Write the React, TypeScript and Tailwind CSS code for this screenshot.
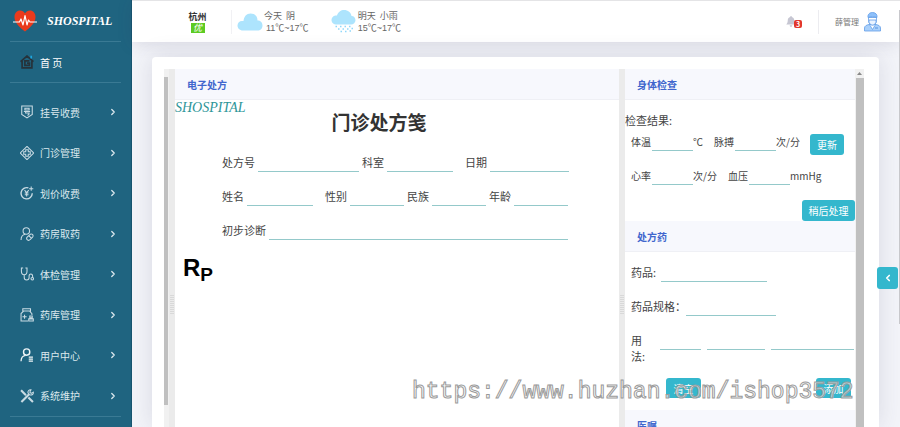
import type { ReactNode } from 'react'
import { ChevronLeft, ChevronRight } from 'lucide-react'

const menu: { label: string; icon: ReactNode }[] = [
  {
    label: '挂号收费',
    icon: (
      <>
        <path d="M2.500 1.500h15v12L10 18.500l-7.500-5z" />
        <path d="M7 4.500h6v2.500H7zM5.500 9.200h9M8 9.200v2.300h5c0 2-.6 3-2.500 3" />
      </>
    ),
  },
  {
    label: '门诊管理',
    icon: (
      <>
        <path d="M10 .5 19.500 10 10 19.500.5 10z" strokeLinejoin="round" />
        <path d="M8.200 5.300h3.600v2.900h2.900v3.600h-2.900v2.900H8.200v-2.900H5.300V8.200h2.900z" />
      </>
    ),
  },
  {
    label: '划价收费',
    icon: (
      <>
        <path d="M12 2.800A8 8 0 1 0 17.500 10.500" strokeWidth="2" />
        <path d="M16 .8v6M13 3.800h6" />
        <path d="m6.500 6 3 3.500 3-3.500M9.500 9.500V15M6.800 10h5.400M6.800 12.400h5.400" />
      </>
    ),
  },
  {
    label: '药房取药',
    icon: (
      <>
        <circle cx="9" cy="5.800" r="4.600" />
        <path d="M1.500 18.500c0-4.500 2.500-7.500 6-8.100" />
        <path d="M10.200 14.500 14 10.800a2.600 2.600 0 0 1 4 3.600l-3.600 3.500a2.600 2.600 0 0 1-4.200-3.400zM12.500 12.500l3.800 3.500" />
      </>
    ),
  },
  {
    label: '体检管理',
    icon: (
      <>
        <path d="M4.500 1.500H2v4.500c0 3 1.700 5 4 5s4-2 4-5V1.500H7.700M6 11v3.500C6 17 7.600 18.500 9.500 18.500S13 17 13 15v-2c0-2 1-3 2.500-3s2.500 1.200 2.500 3v2" />
        <circle cx="17.500" cy="16.800" r="1.800" />
      </>
    ),
  },
  {
    label: '药库管理',
    icon: (
      <>
        <path d="M4 1.200h11v3H4zM5.500 4.200 1.500 8v10.500h10M13.500 4.200 17 8v2M3.500 12.500h6M6.500 9.500v6" />
        <path d="M14 11.500h3.500v2.500H14zM12.500 15.500h6.500v3h-6.500z" />
      </>
    ),
  },
  {
    label: '用户中心',
    icon: (
      <>
        <circle cx="9.500" cy="5.800" r="4.500" stroke="#f0f6f8" strokeWidth="2" />
        <path d="M1.500 19c0-5 2.500-8 6.500-8.500M12.500 13h6M12.500 15.800h6M12.500 18.600h6" stroke="#f0f6f8" strokeWidth="1.800" />
      </>
    ),
  },
  {
    label: '系统维护',
    icon: (
      <>
        <path d="M1.500 1.700 8.500 9M12 12l6.500 6.500" strokeWidth="3" />
        <path d="M2 18.500 13 7.500" strokeWidth="3" />
        <path d="M19 4.500 16 6.300 14 4.400 15.700 1.200c-2.700-.5-5 1.700-4.200 4.500l2.700 2.700c2.700.9 5.500-1 4.800-3.900z" />
      </>
    ),
  },
]

function HeartLogo() {
  return (
    <svg viewBox="0 0 48 44" className="w-6 h-[22px]">
      <path d="M24 43C14 35 3 26 3 14 3 6 8 1 14 1c4 0 8 2 10 6 2-4 6-6 10-6 6 0 11 5 11 13 0 12-11 21-21 29z" fill="#ea3a1c" />
      <path d="M0 24h13l3-6 4 12 4-19 4 19 3-10 3 4h14" fill="none" stroke="#fff" strokeWidth="2.400" strokeLinejoin="round" />
    </svg>
  )
}

function Cloud({ rain = false }: { rain?: boolean }) {
  return (
    <svg viewBox="0 0 52 46" className="w-[26px] h-[23px]" fill="#ade4fd">
      {rain ? (
        <>
          <path d="M11 29a9 9 0 0 1-2-18c2 0 3 0 3 0C14 4 20 0 26 0c8 0 14 5 15 12 5 0 8 4 8 8.500S45 29 40 29z" />
          <path d="M9 33h3M18 33h3M27 33h3M36 33h3M14 38h3M23 38h3M32 38h3M41 37h3M19 43h3M28 43h3M37 42h3" stroke="#8fd8fa" strokeWidth="3" />
        </>
      ) : (
        <path d="M12 41C5 41 1 36 1 31s4-9 9-9h3C14 13 19 7 27 7c8 0 14 5 14 14 6 0 10 4 10 10s-4 10-10 10z" />
      )}
    </svg>
  )
}

function Doctor() {
  return (
    <svg viewBox="0 0 34 40" className="w-[17px] h-5" stroke="#5c9ae6" strokeWidth="1.500">
      <path d="M1 38v-6c0-4 4-6 9-7h14c5 1 9 3 9 7v6z" fill="#a9d0fb" />
      <path d="M11 25l6 10 6-10z" fill="#fff" />
      <path d="M9 11v6c0 6 4 9 8 9s8-3 8-9v-6z" fill="#fff" />
      <path d="M8 11c-1-6 3-10 9-10s10 4 9 10c-6-2-12-2-18 0z" fill="#8ec0fa" />
      <path d="M10 16h14v3c0 4-3 7-7 7s-7-3-7-7z" fill="#eaf3ff" />
      <path d="M22 32h6" stroke="#3c7fd8" />
    </svg>
  )
}

function Sidebar() {
  return (
    <aside className="w-[132px] shrink-0 bg-[#1f6480] border-r border-[#175570] px-[10px] text-white">
      <div className="h-[42px] flex items-center gap-[10px] pl-[3px] border-b border-[#3a7a94]">
        <HeartLogo />
        <span className="font-['Liberation_Serif'] text-[12px] font-bold italic">SHOSPITAL</span>
      </div>
      <a href="#home" className="h-[41px] flex items-center gap-[6px] pl-[10px] border-b border-[#3a7a94] text-[10px]">
        <svg viewBox="0 0 20 20" className="w-[14px] h-[14px]" fill="none" stroke="#26323a" strokeWidth="2.400">
          <path d="M.8 9.500 10 1.500l9.200 8M3 8.500v10h14v-10M13.500 8.500H7v6.300h6.500v-3.300H10" />
          <path d="M16 1v4" stroke="#1da6e0" />
        </svg>
        首 页
      </a>
      <nav className="h-[334px] pt-[9px] grid auto-rows-fr border-b border-[#3a7a94]">
        {menu.map((m) => (
          <a key={m.label} href="#menu" className="flex items-center gap-[6px] pl-[10px] text-[10px] text-[#dce9ee]">
            <svg viewBox="0 0 20 20" className="w-[14px] h-[14px]" fill="none" stroke="#c9dbe3" strokeWidth="1.500">
              {m.icon}
            </svg>
            <span className="flex-1">{m.label}</span>
            <ChevronRight className="w-[10px] h-[10px] mr-[3px]" strokeWidth={3} />
          </a>
        ))}
      </nav>
    </aside>
  )
}

function Header() {
  return (
    <header className="h-[42px] shrink-0 bg-white border-t border-[#e4e4e6] shadow-[0_2px_16px_rgba(60,60,90,0.14)] flex items-center text-[9px] leading-3 text-[#666]">
      <div className="w-[100px] h-6 pl-8 border-r border-[#f1f1f4] flex flex-col items-center justify-center">
        <b className="text-[#333]">杭州</b>
        <span className="w-[14px] h-[10px] bg-[#5ccb22] text-white italic leading-[10px] text-center">优</span>
      </div>
      <div className="flex items-center ml-[5px]">
        <Cloud />
        <div className="ml-px">
          <p>今天&nbsp; 阴</p>
          <p className="pl-[2px] font-['Liberation_Sans','Noto_Sans_CJK_SC',sans-serif]">11℃~17℃</p>
        </div>
      </div>
      <div className="flex items-center ml-[22px]">
        <Cloud rain />
        <div className="ml-px">
          <p>明天&nbsp; 小雨</p>
          <p className="font-['Liberation_Sans','Noto_Sans_CJK_SC',sans-serif]">15℃~17℃</p>
        </div>
      </div>
      <button className="relative ml-auto w-4 h-3 mr-4" aria-label="消息">
        <svg viewBox="0 0 20 22" className="w-[10px] h-[11px]" fill="#c6c6d2">
          <path d="M10 0c1.200 0 1.600.8 1.600 1.800C15 2.600 16.500 5.500 16.500 9c0 4 1.500 6 3 8H.5c1.500-2 3-4 3-8C3.500 5.500 5 2.600 8.400 1.800 8.400.8 8.800 0 10 0zM7.500 18.500h5c0 2-1 3-2.500 3s-2.500-1-2.500-3z" />
        </svg>
        <span className="absolute right-0 top-1 w-2 h-2 rounded-[2px] bg-[#e2362b] text-white text-[7px] leading-2 font-bold">3</span>
      </button>
      <div className="h-6 border-l border-[#ececf0] pl-4 pr-[19px] flex items-center gap-[5px] text-[8px] text-[#777]">
        薛管理
        <Doctor />
      </div>
    </header>
  )
}

type LineProps = { id: string; width: string; label?: string; unit?: string; gap?: string }

function Line({ id, width, label, unit, gap = 'mr-[3px]' }: LineProps) {
  return (
    <div className="flex items-center h-5 shrink-0">
      {label && <label htmlFor={id} className={`${gap} whitespace-nowrap`}>{label}</label>}
      <input id={id} aria-label={label ?? id} className={`${width} h-5 border-b border-[#94c9ca] outline-none bg-transparent`} />
      {unit && <span>{unit}</span>}
    </div>
  )
}

function PanelTitle({ children }: { children: ReactNode }) {
  return (
    <h3 className="h-[31px] shrink-0 pl-3 flex items-center bg-[#f7f8fd] border-b border-[#eff0f5] text-[10px] font-bold text-[#4166cd]">
      {children}
    </h3>
  )
}

function Splitter() {
  return (
    <div className="w-[6px] shrink-0 bg-[#ebebeb] flex justify-center pt-[226px]">
      <svg width="4" height="19" stroke="#c6c6c6" strokeDasharray="1 1">
        <path d="M1 0v19M3 0v19" />
      </svg>
    </div>
  )
}

function Prescription() {
  return (
    <section className="flex-1 min-w-0">
      <PanelTitle>电子处方</PanelTitle>
      <p className="h-4 font-['Liberation_Serif'] text-[14px] leading-4 italic text-[#2d9598]">SHOSPITAL</p>
      <h1 className="h-9 pr-9 text-center text-[19px] leading-[12px] font-bold text-[#333]">门诊处方笺</h1>
      <div className="pl-[47px] flex flex-col gap-[14px] text-[11px]">
        <div className="flex">
          <Line id="no" label="处方号" width="w-[101px]" />
          <div className="ml-[3px]"><Line id="dept" label="科室" width="w-[66px]" /></div>
          <div className="ml-3"><Line id="date" label="日期" width="w-[79px]" /></div>
        </div>
        <div className="flex">
          <Line id="name" label="姓名" width="w-[66px]" />
          <div className="ml-3"><Line id="sex" label="性别" width="w-[54px]" /></div>
          <div className="ml-[3px]"><Line id="nation" label="民族" width="w-[54px]" /></div>
          <div className="ml-[3px]"><Line id="age" label="年龄" width="w-[54px]" /></div>
        </div>
        <Line id="diagnosis" label="初步诊断" width="w-[299px]" />
      </div>
      <p className="mt-[14px] pl-2 font-['Liberation_Sans'] text-[24px] leading-7 font-bold text-black">
        R<sub className="text-[19px]">P</sub>
      </p>
    </section>
  )
}

const btn = 'rounded-[3px] bg-[#34b7cd] text-white text-[10px] flex items-center justify-center'

function SidePanel() {
  return (
    <section className="w-[230px] shrink-0 overflow-hidden">
      <PanelTitle>身体检查</PanelTitle>
      <p className="mt-3 h-4 text-[11px] leading-4">检查结果:</p>
      <div className="pl-[6px] pt-[3px] flex flex-col text-[10px]">
        <div className="flex h-6">
          <Line id="temp" label="体温" width="w-[41px]" unit="℃" gap="mr-px" />
          <div className="ml-[11px]"><Line id="pulse" label="脉搏" width="w-[41px]" unit="次/分" gap="mr-px" /></div>
          <button className={`${btn} w-[34px] h-[21px] ml-[10px] self-end`}>更新</button>
        </div>
        <div className="flex mt-2 h-6 items-center">
          <Line id="heart" label="心率" width="w-[41px]" unit="次/分" gap="mr-px" />
          <div className="ml-[11px]"><Line id="pressure" label="血压" width="w-[41px]" unit="mmHg" gap="mr-px" /></div>
        </div>
        <button className={`${btn} w-[53px] h-[21px] mt-[13px] self-end`}>稍后处理</button>
      </div>
      <PanelTitle>处方药</PanelTitle>
      <div className="pl-[6px] pt-[10px] text-[11px] flex flex-col gap-[14px]">
        <div className="flex gap-[5px]">
          <label htmlFor="drug" className="leading-5">药品:</label>
          <Line id="drug" width="w-[106px]" />
        </div>
        <div className="flex">
          <label htmlFor="spec" className="leading-5">药品规格：</label>
          <Line id="spec" width="w-[90px]" />
        </div>
        <div className="flex gap-[6px]">
          <label htmlFor="usage" className="w-[23px] leading-4 pt-[2px]">用<br />法:</label>
          <Line id="usage" width="w-[41px]" />
          <Line id="dose" width="w-[58px]" />
          <Line id="freq" width="w-[83px]" />
        </div>
      </div>
      <div className="flex justify-between pl-[41px] pr-1 pt-[14px] pb-3">
        <button className={`${btn} w-[35px] h-5`}>清空</button>
        <button className={`${btn} w-[35px] h-5`}>添加</button>
      </div>
      <PanelTitle>医嘱</PanelTitle>
    </section>
  )
}

export default function App() {
  return (
    <div className="relative h-screen overflow-hidden flex bg-[#f3f4f9] text-[#444] font-['Noto_Sans_CJK_SC',sans-serif]">
      <Sidebar />
      <div className="flex-1 min-w-0 flex flex-col">
        <Header />
        <main className="flex-1 min-h-0 mt-[15px] ml-5 mr-[21px] pl-3 pr-[15px] pt-3 flex rounded-t bg-white shadow-[0_0_24px_rgba(60,60,90,0.14)]">
          <div className="w-[5px] shrink-0 bg-[#f1f1f1] pt-2">
            <div className="w-1 h-[328px] bg-[#c0c0c0]" />
          </div>
          <Splitter />
          <Prescription />
          <Splitter />
          <SidePanel />
          <div className="w-[9px] shrink-0 bg-[#f1f1f1] flex flex-col items-center">
            <svg viewBox="0 0 9 9" className="w-[9px] h-[9px]" fill="#888"><path d="M2 6l2.500-3L7 6z" /></svg>
            <div className="w-2 flex-1 bg-[#c0c0c0]" />
          </div>
        </main>
      </div>
      <button aria-label="展开" className={`${btn} absolute right-[2px] top-[267px] w-[21px] h-[22px]`}>
        <ChevronLeft className="w-[10px] h-[10px]" strokeWidth={4} />
      </button>
      <div className="absolute right-0 top-[10px] w-px h-[314px] bg-[#c8c8cc]" />
      <p className="absolute left-[412px] top-[376px] pointer-events-none whitespace-nowrap font-['Liberation_Mono'] text-[23px] leading-8 text-white/60 [-webkit-text-stroke:1px_#9a9a9a]">
        https://www.huzhan.com/ishop3572
      </p>
    </div>
  )
}
